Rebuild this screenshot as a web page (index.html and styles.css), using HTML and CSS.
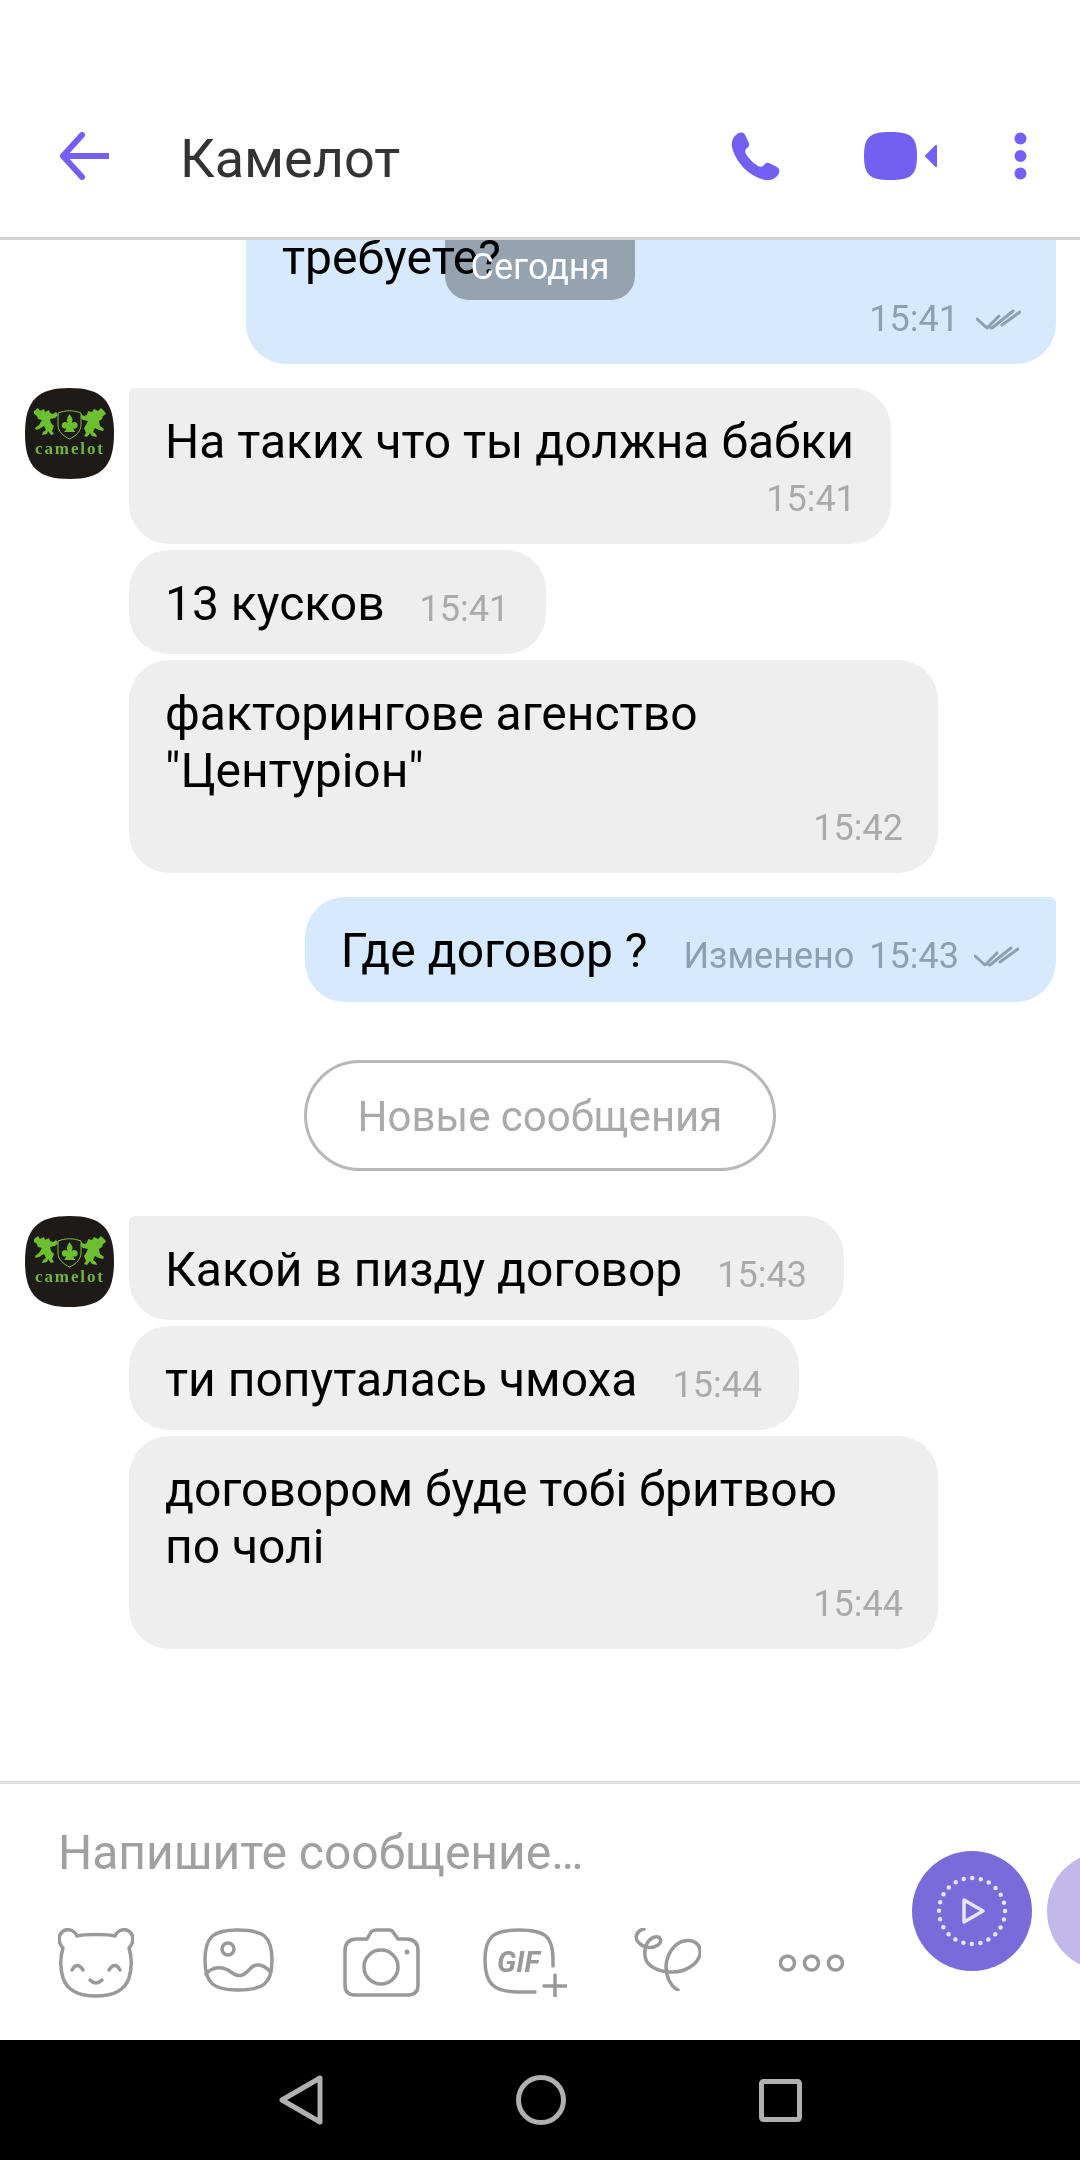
FILE: index.html
```html
<!DOCTYPE html>
<html lang="ru">
<head>
  <meta charset="UTF-8" />
  <meta name="viewport" content="width=device-width, initial-scale=1.0"/>
  <title>Камелот</title>
  <link rel="stylesheet" href="styles.css">
</head>
<body>

<svg class="defs" width="0" height="0">
  <symbol id="camelotLogo" viewBox="0 0 89 91">
    <path d="M44.5 0C76 0 89 12 89 45.500C89 79 76 91 44.500 91C13 91 0 79 0 45.500C0 12 13 0 44.500 0Z" fill="#1d1a17"/>
    <!-- left lion -->
    <path class="lion" d="M9 23l4-3 2 3 4-2 1 3 4-2 1 3 3 1 3-2 2 3-3 3-5 1 1 4 3 3-2 5 2 3-3 1-3-4-1 3-5 1 1-3 3-2-2-4-5 3-3 1-1-2 4-3 3-5-4-1-1-3-3-2z"/>
    <!-- right lion -->
    <path class="lion" d="M80 24l-4-4-3 3-4-2-2 3-4-1-1 4-3 1-3-2-1 3 3 3 5 1-2 4-2 3 2 5-2 3 3 1 3-4 2 3 5 1-1-3-3-2 2-4 4 2 4 1 1-2-4-3-1-5 3-2 1-3 3-2z"/>
    <!-- shield -->
    <path d="M33 25c8-3 15-3 23 0v12c0 6-5 11-11.500 14C38 48 33 43 33 37z" fill="#1d1a17" stroke="#7cbf4a" stroke-width="1"/>
    <path class="lion" d="M44.500 26c3 4 4 6 2 9 3-2 5-1 6 1 1 3-2 6-4 4 0 2 1 3 2 4H39c1-1 2-2 2-4-2 2-5-1-4-4 1-2 3-3 6-1-2-3-1-5 1.500-9z"/>
    <text class="logo-text" x="10" y="66" textLength="68">camelot</text>
  </symbol>
  <symbol id="readCheck" viewBox="0 0 45 22">
    <path d="M1 10l10 9 12-12M15 19l1 0L37 2M26 16L44 3" fill="none" stroke="#8ba0b4" stroke-width="3" stroke-linecap="round" stroke-linejoin="round"/>
  </symbol>
</svg>

<div class="app">

  <header class="topbar">
    <svg class="back-arrow" width="49" height="48" viewBox="0 0 49 48">
      <path d="M22 3L3 24l19 21M3 24h46" fill="none" stroke="#7360f2" stroke-width="6" stroke-linecap="round" stroke-linejoin="round"/>
    </svg>
    <h1 class="chat-title">Камелот</h1>
    <svg class="phone-icon" width="49" height="48" viewBox="0 0 49 48">
      <path fill="#7360f2" d="M6 2C9 0 13 0 14 3L18 11C19 14 17 15 15 17C14 18 14 20 15 22C18 27 22 31 27 34C29 35 31 35 32 34C34 32 35 30 38 31L46 35C49 37 49 40 47 43C44 47 39 49 34 48C18 44 5 31 1 15C0 10 2 5 6 2Z"/>
    </svg>
    <svg class="video-icon" width="73" height="48" viewBox="0 0 73 48">
      <path fill="#7360f2" d="M26 0C46 0 53 4 53 24C53 44 46 48 26 48C7 48 0 44 0 24C0 4 7 0 26 0Z"/>
      <path fill="#7360f2" stroke="#7360f2" stroke-width="2" stroke-linejoin="round" d="M72 14L62 24L72 34Z"/>
    </svg>
    <svg class="more-icon" width="15" height="48" viewBox="0 0 15 48">
      <circle cx="7.500" cy="6.500" r="6" fill="#7360f2"/>
      <circle cx="7.500" cy="24" r="6" fill="#7360f2"/>
      <circle cx="7.500" cy="41.500" r="6" fill="#7360f2"/>
    </svg>
  </header>

  <main class="chat">
    <div class="date-tag"><span>Сегодня</span></div>

    <div class="outgoing">
      <div class="bubble bubble-out bubble-first-out">
        <div class="msg-text">требуете?</div>
        <div class="msg-meta">
          <span class="msg-time">15:41</span>
          <svg class="check" width="45" height="22"><use href="#readCheck"/></svg>
        </div>
      </div>
    </div>

    <div class="group">
      <svg class="avatar" width="89" height="91"><use href="#camelotLogo"/></svg>
      <div class="group-msgs">
        <div class="bubble bubble-in bubble-first">
          <div class="msg-text">На таких что ты должна бабки</div>
          <div class="msg-meta"><span class="msg-time">15:41</span></div>
        </div>
        <div class="bubble bubble-in bubble-inline">
          <div class="msg-text">13 кусков</div>
          <span class="msg-time">15:41</span>
        </div>
        <div class="bubble bubble-in bubble-wide">
          <div class="msg-text">факторингове агенство<br>"Центуріон"</div>
          <div class="msg-meta"><span class="msg-time">15:42</span></div>
        </div>
      </div>
    </div>

    <div class="outgoing">
      <div class="bubble bubble-out bubble-inline">
        <div class="msg-text">Где договор ?</div>
        <div class="msg-info">
          <span class="msg-time">Изменено</span>
          <span class="msg-time">15:43</span>
          <svg class="check" width="45" height="22"><use href="#readCheck"/></svg>
        </div>
      </div>
    </div>

    <div class="new-label">Новые сообщения</div>

    <div class="group">
      <svg class="avatar" width="89" height="91"><use href="#camelotLogo"/></svg>
      <div class="group-msgs">
        <div class="bubble bubble-in bubble-first bubble-inline">
          <div class="msg-text">Какой в пизду договор</div>
          <span class="msg-time">15:43</span>
        </div>
        <div class="bubble bubble-in bubble-inline">
          <div class="msg-text">ти попуталась чмоха</div>
          <span class="msg-time">15:44</span>
        </div>
        <div class="bubble bubble-in bubble-wide">
          <div class="msg-text">договором буде тобі бритвою<br>по чолі</div>
          <div class="msg-meta"><span class="msg-time">15:44</span></div>
        </div>
      </div>
    </div>
  </main>

  <footer class="composer">
    <div class="composer-main">
      <div class="placeholder">Напишите сообщение…</div>
      <div class="tools">
        <svg class="tool" width="76" height="70" viewBox="0 0 76 70">
          <path d="M19 8C26 6 50 6 57 8C60 1 68 0 72 4C77 9 75 16 71 20C74 30 74 40 71 50C67 62 55 68 38 68C21 68 9 62 5 50C2 40 2 30 5 20C1 16 -1 9 4 4C8 0 16 1 19 8Z"/>
          <path d="M14 42Q19 33 25 42M51 42Q57 33 62 42M32 52Q38 58 44 52"/>
        </svg>
        <svg class="tool" width="71" height="64" viewBox="0 0 71 64">
          <path d="M35 2C60 2 69 8 69 32C69 56 60 62 35 62C11 62 2 56 2 32C2 8 11 2 35 2Z"/>
          <circle cx="25" cy="21" r="6"/>
          <path d="M3 46C10 38 20 38 28 44C36 50 40 48 46 42C52 34 60 36 68 44"/>
        </svg>
        <svg class="tool" width="77" height="69" viewBox="0 0 77 69">
          <path d="M14 11H24L28 4Q30 2 33 2H46Q49 2 50 4L55 11H63Q75 11 75 23V57Q75 67 65 67H12Q2 67 2 57V23Q2 11 14 11Z"/>
          <circle cx="38" cy="39" r="17"/>
          <circle class="tool-dot" cx="64" cy="24" r="2.500"/>
        </svg>
        <svg class="tool tool-gif" width="84" height="69" viewBox="0 0 84 69">
          <path d="M70 38V32C70 8 62 2 36 2C11 2 2 8 2 32C2 56 11 64 36 64H52"/>
          <text class="gif-text" x="14" y="44">GIF</text>
          <path d="M61 58H83M72 47V69"/>
        </svg>
        <svg class="tool tool-doodle" width="67" height="63" viewBox="0 0 67 63">
          <path d="M10 1C2 3 0 10 5 15C10 20 18 21 24 17C29 13 26 8 21 9C13 11 10 20 11 28C12 38 24 44 38 44C52 44 64 36 66 26C67 16 60 11 50 13C40 15 33 26 32 38C32 48 36 58 44 62"/>
        </svg>
        <svg class="tool tool-more" width="65" height="18" viewBox="0 0 65 18">
          <circle cx="8.500" cy="9" r="7"/>
          <circle cx="32.500" cy="9" r="7"/>
          <circle cx="56.500" cy="9" r="7"/>
        </svg>
      </div>
    </div>
    <div class="composer-actions">
      <div class="round-btn round-btn-main">
        <svg width="120" height="120" viewBox="0 0 120 120">
          <circle cx="60" cy="60" r="33" fill="none" stroke="#e8e5fa" stroke-width="4.500" stroke-linecap="round" stroke-dasharray="0 8.640"/>
          <path d="M52 49V71L71 60Z" fill="none" stroke="#e8e5fa" stroke-width="3.500" stroke-linejoin="round"/>
        </svg>
      </div>
      <div class="round-btn round-btn-light"></div>
    </div>
  </footer>

  <nav class="navbar">
    <svg width="44" height="50" viewBox="0 0 44 50">
      <path d="M41 3V47L3 25Z" fill="none" stroke="#b0b0b0" stroke-width="5" stroke-linejoin="round"/>
    </svg>
    <svg width="50" height="50" viewBox="0 0 50 50">
      <circle cx="25" cy="25" r="22.500" fill="none" stroke="#b0b0b0" stroke-width="5"/>
    </svg>
    <svg width="43" height="43" viewBox="0 0 43 43">
      <rect x="2.500" y="2.500" width="38" height="38" rx="2" fill="none" stroke="#b0b0b0" stroke-width="5"/>
    </svg>
  </nav>

</div>

</body>
</html>
```

FILE: styles.css
```css
body {
  margin: 0;
  background-color: #fff;
  font-family: Roboto, sans-serif;
  color: #000;
}

.defs {
  position: absolute;
}

.app {
  width: 1080px;
  height: 2160px;
  display: flex;
  flex-direction: column;
  overflow: hidden;
}

/* top bar */
.topbar {
  height: 240px;
  box-sizing: border-box;
  padding: 132px 52px 0 60px;
  display: flex;
  align-items: flex-start;
  border-bottom: 3px solid #d4d4d4;
  flex-shrink: 0;
}

.chat-title {
  flex: 1;
  margin: 2px 0 0 71px;
  font-size: 54px;
  font-weight: 400;
  line-height: 50px;
  color: #333;
}

.video-icon {
  margin-left: 84px;
}

.more-icon {
  margin-left: 76px;
}

/* messages */
.chat {
  flex: 1;
  min-height: 0;
  position: relative;
  display: flex;
  flex-direction: column;
  justify-content: flex-end;
  overflow: hidden;
  padding-bottom: 132px;
}

.date-tag {
  position: absolute;
  top: 0;
  left: 445px;
  width: 190px;
  height: 60px;
  display: flex;
  align-items: flex-start;
  justify-content: center;
  color: #fff;
  font-size: 36px;
  line-height: 54px;
}

.date-tag::before {
  content: "";
  position: absolute;
  top: 0;
  left: 0;
  right: 0;
  bottom: 0;
  background: #b2b2b2;
  border-radius: 0 0 24px 24px;
  mix-blend-mode: multiply;
}

.date-tag span {
  position: relative;
}

.outgoing {
  display: flex;
  justify-content: flex-end;
  padding-right: 24px;
  margin-bottom: 24px;
}

.group {
  display: flex;
  align-items: flex-start;
  padding-left: 25px;
  margin-bottom: 24px;
}

.group:last-child {
  margin-bottom: 0;
}

.avatar {
  flex-shrink: 0;
  margin-right: 15px;
}

.group-msgs {
  display: flex;
  flex-direction: column;
  align-items: flex-start;
  gap: 6px;
}

.bubble {
  box-sizing: border-box;
  padding: 25px 37px 0 36px;
  border-radius: 40px;
}

.bubble-in {
  background: #eeeeee;
}

.bubble-out {
  background: #d6e9fd;
}

.bubble-first {
  border-top-left-radius: 6px;
}

.bubble-out.bubble-inline {
  height: 105px;
  border-top-right-radius: 6px;
}

.bubble-first-out {
  width: 810px;
}

.bubble-wide {
  width: 809px;
}

.bubble-inline {
  height: 104px;
  display: flex;
  align-items: flex-start;
}

.msg-text {
  font-size: 48px;
  line-height: 57px;
}

.msg-meta {
  height: 74px;
  margin-right: -2px;
  padding-top: 9px;
  box-sizing: border-box;
  display: flex;
  justify-content: flex-end;
  align-items: flex-start;
  gap: 17px;
}

.bubble-first-out .msg-meta {
  height: 78px;
  padding-top: 13px;
}

.msg-time {
  font-size: 36px;
  line-height: 40px;
  color: #aaaaaa;
}

.bubble-out .msg-time {
  color: #8ba0b4;
}

.bubble-inline > .msg-time {
  margin-left: 35px;
  margin-top: 14px;
}

.msg-info {
  display: flex;
  margin-left: 36px;
  margin-top: 14px;
  gap: 15px;
}

.check {
  margin-top: 10px;
}

.new-label {
  align-self: center;
  width: 472px;
  height: 111px;
  box-sizing: border-box;
  margin: 34px 0 45px;
  border: 3px solid #b8b8b8;
  border-radius: 56px;
  text-align: center;
  font-size: 42px;
  line-height: 108px;
  color: #aaaaaa;
}

/* composer */
.composer {
  height: 259px;
  box-sizing: border-box;
  flex-shrink: 0;
  display: flex;
  border-top: 3px solid #e2e2e2;
  overflow: hidden;
}

.composer-main {
  width: 912px;
  flex-shrink: 0;
  box-sizing: border-box;
  padding-left: 58px;
}

.placeholder {
  margin-top: 41px;
  font-size: 48px;
  line-height: 56px;
  color: #a0a0a0;
}

.tools {
  margin-top: 47px;
  display: flex;
  align-items: flex-start;
  gap: 69px;
}

.tool {
  flex-shrink: 0;
  fill: none;
  stroke: #999;
  stroke-width: 3.500;
  stroke-linecap: round;
  stroke-linejoin: round;
}

.tool-dot {
  fill: #999;
  stroke: none;
}

.gif-text {
  fill: #999;
  stroke: none;
  font-family: Roboto, sans-serif;
  font-size: 29px;
  font-weight: 700;
  font-style: italic;
}

.tool-gif {
  margin-left: -6px;
}

.tool-doodle {
  margin-left: -2px;
}

.tool-more {
  margin: 26px 0 0 9px;
}

.composer-actions {
  display: flex;
  gap: 15px;
  margin-top: 67px;
}

.round-btn {
  width: 120px;
  height: 120px;
  border-radius: 50%;
  flex-shrink: 0;
}

.round-btn-main {
  background: #7a6bdb;
}

.round-btn-light {
  background: #c2b8ea;
}

.lion {
  fill: #6cc02e;
}

.logo-text {
  fill: #6fb544;
  font-family: "Liberation Serif", serif;
  font-size: 17px;
  font-weight: 700;
}

/* android nav */
.navbar {
  height: 120px;
  flex-shrink: 0;
  background: #000;
  display: flex;
  align-items: center;
  justify-content: center;
  gap: 193px;
}
```
